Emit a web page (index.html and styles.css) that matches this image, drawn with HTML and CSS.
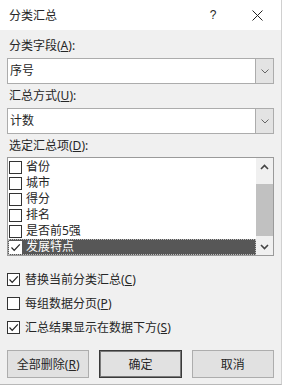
FILE: index.html
```html
<!DOCTYPE html>
<html lang="zh-CN">
<head>
    <meta charset="UTF-8">
    <meta name="viewport" content="width=device-width, initial-scale=1.0">
    <title>分类汇总</title>
    <link rel="stylesheet" href="styles.css">
</head>
<body>
    <div class="dialog">
        <div class="titlebar">
            <span class="title">分类汇总</span>
            <span class="help">?</span>
            <span class="close">
                <svg width="11" height="11" viewBox="0 0 11 11"><path d="M0.5 0.5L10.5 10.5M10.5 0.5L0.5 10.5" stroke="#222" stroke-width="1" fill="none"/></svg>
            </span>
        </div>

        <div class="content">
            <div class="field-label">分类字段(<u>A</u>):</div>
            <div class="combo">
                <span class="combo-value">序号</span>
                <span class="combo-btn">
                    <svg width="8" height="5" viewBox="0 0 8 5"><path d="M0.5 0.5L4 4L7.5 0.5" stroke="#666" stroke-width="1" fill="none"/></svg>
                </span>
            </div>

            <div class="field-label">汇总方式(<u>U</u>):</div>
            <div class="combo">
                <span class="combo-value">计数</span>
                <span class="combo-btn">
                    <svg width="8" height="5" viewBox="0 0 8 5"><path d="M0.5 0.5L4 4L7.5 0.5" stroke="#666" stroke-width="1" fill="none"/></svg>
                </span>
            </div>

            <div class="field-label short">选定汇总项(<u>D</u>):</div>
            <div class="listbox">
                <ul class="items">
                    <li><span class="box"></span>省份</li>
                    <li><span class="box"></span>城市</li>
                    <li><span class="box"></span>得分</li>
                    <li><span class="box"></span>排名</li>
                    <li><span class="box"></span>是否前5强</li>
                    <li class="selected">
                        <span class="box">
                            <svg width="11" height="11" viewBox="0 0 11 11"><path d="M1.5 5.5L4.2 8.3L9.8 2.3" stroke="#222" stroke-width="1.2" fill="none"/></svg>
                        </span>发展特点
                    </li>
                </ul>
                <div class="scrollbar">
                    <div class="arrow">
                        <svg width="9" height="6" viewBox="0 0 9 6"><path d="M1 5L4.5 1.5L8 5" stroke="#444" stroke-width="1.6" fill="none"/></svg>
                    </div>
                    <div class="track"><div class="thumb"></div></div>
                    <div class="arrow">
                        <svg width="9" height="6" viewBox="0 0 9 6"><path d="M1 1L4.5 4.5L8 1" stroke="#444" stroke-width="1.6" fill="none"/></svg>
                    </div>
                </div>
            </div>

            <div class="options">
                <div class="option">
                    <span class="box">
                        <svg width="11" height="11" viewBox="0 0 11 11"><path d="M1.5 5.5L4.2 8.3L9.8 2.3" stroke="#222" stroke-width="1.2" fill="none"/></svg>
                    </span>
                    <span>替换当前分类汇总(<u>C</u>)</span>
                </div>
                <div class="option">
                    <span class="box"></span>
                    <span>每组数据分页(<u>P</u>)</span>
                </div>
                <div class="option">
                    <span class="box">
                        <svg width="11" height="11" viewBox="0 0 11 11"><path d="M1.5 5.5L4.2 8.3L9.8 2.3" stroke="#222" stroke-width="1.2" fill="none"/></svg>
                    </span>
                    <span>汇总结果显示在数据下方(<u>S</u>)</span>
                </div>
            </div>

            <div class="buttons">
                <button>全部删除(<u>R</u>)</button>
                <button class="default">确定</button>
                <button>取消</button>
            </div>
        </div>
    </div>
</body>
</html>
```

FILE: styles.css
```css
body {
    margin: 0;
    font-family: "Noto Sans", "Noto Sans CJK SC", sans-serif;
    font-size: 12px;
    color: #262626;
    background-color: #ffffff;
}

.dialog {
    width: 281px;
    height: 384px;
    background-color: #f0f0f0;
    border-right: 1px solid #d0d0d0;
    border-bottom: 1px solid #b8b8b8;
}

/* Barra de titulo */
.titlebar {
    height: 30px;
    display: flex;
    align-items: center;
    padding: 0 0 0 9px;
    background-color: #ffffff;
}
.title {
    flex: 1;
}
.help {
    width: 14px;
    margin-right: 32px;
    font-family: "Liberation Sans", sans-serif;
    text-align: center;
}
.close {
    display: flex;
    margin-right: 18px;
}

.content {
    padding: 4px 7px 0 7px;
}

.field-label {
    height: 24px;
    line-height: 24px;
    padding-left: 2px;
}
.field-label.short {
    height: 23px;
}

/* Combos */
.combo {
    height: 26px;
    box-sizing: border-box;
    display: flex;
    border: 1px solid #acacac;
    background-color: #ffffff;
}
.combo-value {
    flex: 1;
    line-height: 24px;
    padding-left: 2px;
}
.combo-btn {
    width: 17px;
    display: flex;
    align-items: center;
    justify-content: center;
    background-color: #e3e3e3;
    border-left: 1px solid #acacac;
}

/* Lista con casillas */
.listbox {
    height: 99px;
    box-sizing: border-box;
    display: flex;
    border: 1px solid #9a9a9a;
    background-color: #ffffff;
}
.items {
    flex: 1;
    list-style: none;
    margin: 0;
    padding: 1px 0 0 0;
}
.items li {
    height: 16px;
    display: flex;
    align-items: center;
    gap: 4px;
    padding-left: 1px;
    line-height: 16px;
}
.items li.selected {
    background-color: #575757;
    color: #ffffff;
    outline: 1px dotted #bbbbbb;
    outline-offset: -1px;
}

.box {
    width: 13px;
    height: 13px;
    box-sizing: border-box;
    flex: none;
    display: flex;
    align-items: center;
    justify-content: center;
    border: 1px solid #333333;
    background-color: #ffffff;
}
.selected .box {
    border-color: #ffffff;
}

.scrollbar {
    width: 17px;
    display: flex;
    flex-direction: column;
    background-color: #f0f0f0;
}
.arrow {
    height: 17px;
    display: flex;
    align-items: center;
    justify-content: center;
}
.track {
    flex: 1;
}
.thumb {
    height: 52px;
    margin-top: 9px;
    background-color: #c1c1c1;
}

/* Opciones */
.options {
    margin-top: 11px;
}
.option {
    height: 24px;
    display: flex;
    align-items: center;
    gap: 5px;
}

/* Botones */
.buttons {
    margin-top: 11px;
    display: grid;
    grid-template-columns: 1fr 1fr 1fr;
    gap: 10px;
}
button {
    height: 28px;
    font-family: inherit;
    font-size: 12px;
    color: #262626;
    background-color: #e1e1e1;
    border: 1px solid #adadad;
    padding: 0;
}
button.default {
    border: 1px solid #3a3a3a;
    box-shadow: inset 0 0 0 1px #7a7a7a;
}
```
